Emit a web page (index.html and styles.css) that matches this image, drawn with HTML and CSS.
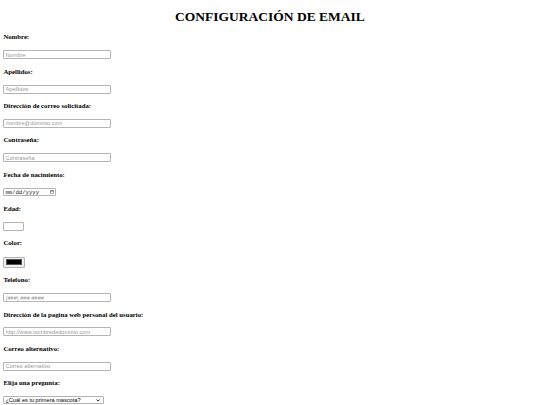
FILE: index.html
```html
<!DOCTYPE html>
<html lang="es">
<head>
<meta charset="utf-8">
<title>Configuración de email</title>
<link rel="stylesheet" href="styles.css">
</head>
<body>
<h1 class="title">CONFIGURACIÓN DE EMAIL</h1>
<form class="form">
  <h4 class="label">Nombre:</h4>
  <input class="field text" type="text" placeholder="Nombre">
  <h4 class="label">Apellidos:</h4>
  <input class="field text" type="text" placeholder="Apellidos">
  <h4 class="label">Dirección de correo solicitada:</h4>
  <input class="field text" type="email" placeholder="nombre@dominio.com">
  <h4 class="label">Contraseña:</h4>
  <input class="field text" type="password" placeholder="Contraseña">
  <h4 class="label">Fecha de nacimiento:</h4>
  <input class="field date" type="date">
  <h4 class="label">Edad:</h4>
  <input class="field number" type="number">
  <h4 class="label">Color:</h4>
  <input class="color" type="color" value="#000000">
  <h4 class="label">Telefono:</h4>
  <input class="field text" type="tel" placeholder="(###) ###-####">
  <h4 class="label">Dirección de la pagina web personal del usuario:</h4>
  <input class="field text" type="url" placeholder="http://www.nombrededominio.com">
  <h4 class="label">Correo alternativo:</h4>
  <input class="field text" type="email" placeholder="Correo alternativo">
  <h4 class="label">Elija una pregunta:</h4>
  <span class="select-wrap">
    <select class="select">
      <option>¿Cuál es tu primera mascota?</option>
      <option>¿Cuál es el nombre de tu escuela primaria?</option>
    </select>
    <svg class="chevron" viewBox="0 0 10 6" width="4" height="2.6" aria-hidden="true"><path d="M1 1 L5 5 L9 1" fill="none" stroke="#000" stroke-width="2"/></svg>
  </span>
</form>
</body>
</html>
```

FILE: styles.css
```css
body {
  margin: 3.375px;
  font-family: "Liberation Serif", "Times New Roman", serif;
  color: #000;
  background: #fff;
}
.title {
  text-align: center;
  font-size: 13.5px;
  line-height: 15.525px;
  margin: 6px 0 0;
}
.form {
  display: flex;
  flex-direction: column;
  align-items: flex-start;
  margin: 0;
}
.label {
  font-size: 6.75px;
  line-height: 7.76px;
  margin: 8.5px 0 9.2px;
}
.field {
  display: block;
  box-sizing: border-box;
  height: 8.86px;
  margin: 0;
  padding: 0 1.2px;
  border: 1px solid #b4b4b4;
  border-radius: 1px;
  background: #fff;
  font-family: "Liberation Sans", Arial, sans-serif;
  font-size: 5.625px;
  line-height: 6px;
  color: #000;
  outline: none;
}
.field::placeholder {
  color: #9a9a9a;
}
.text {
  width: 108px;
}
.number {
  width: 20.5px;
  -moz-appearance: textfield;
}
.number::-webkit-inner-spin-button,
.number::-webkit-outer-spin-button {
  -webkit-appearance: none;
  margin: 0;
}
.date {
  width: 52.5px;
  height: 7.6px;
  margin: 0.7px 0 0.6px;
  padding: 0 1px;
  line-height: 5px;
  font-family: "Liberation Mono", "DejaVu Sans Mono", monospace;
  color: #222;
}
.date::-webkit-calendar-picker-indicator {
  width: 4px;
  height: 4px;
  padding: 0;
  margin: 0 0 0 1px;
}
.date::-webkit-datetime-edit,
.date::-webkit-datetime-edit-fields-wrapper,
.date::-webkit-datetime-edit-month-field,
.date::-webkit-datetime-edit-day-field,
.date::-webkit-datetime-edit-year-field,
.date::-webkit-datetime-edit-text {
  padding: 0;
  margin: 0;
  line-height: 5px;
}
.color {
  display: block;
  box-sizing: border-box;
  width: 21.3px;
  height: 10.6px;
  margin: 0.7px 0 0.2px;
  padding: 1.5px 1.3px;
  border: 1px solid #b4b4b4;
  border-radius: 1px;
  background: #efefef;
  -webkit-appearance: none;
  appearance: none;
}
.color::-webkit-color-swatch-wrapper {
  padding: 0;
}
.color::-webkit-color-swatch {
  border: 0.6px solid #555;
  border-radius: 0;
}
.select-wrap {
  position: relative;
  display: block;
  width: 101px;
}
.select {
  display: block;
  box-sizing: border-box;
  width: 101px;
  height: 8px;
  margin: 0;
  padding: 0 1px;
  border: 1px solid #b4b4b4;
  border-radius: 1px;
  background: #fff;
  font-family: "Liberation Sans", Arial, sans-serif;
  font-size: 5.625px;
  line-height: 6px;
  color: #000;
  -webkit-appearance: none;
  appearance: none;
}
.chevron {
  position: absolute;
  right: 4.5px;
  top: 2.8px;
}
```
